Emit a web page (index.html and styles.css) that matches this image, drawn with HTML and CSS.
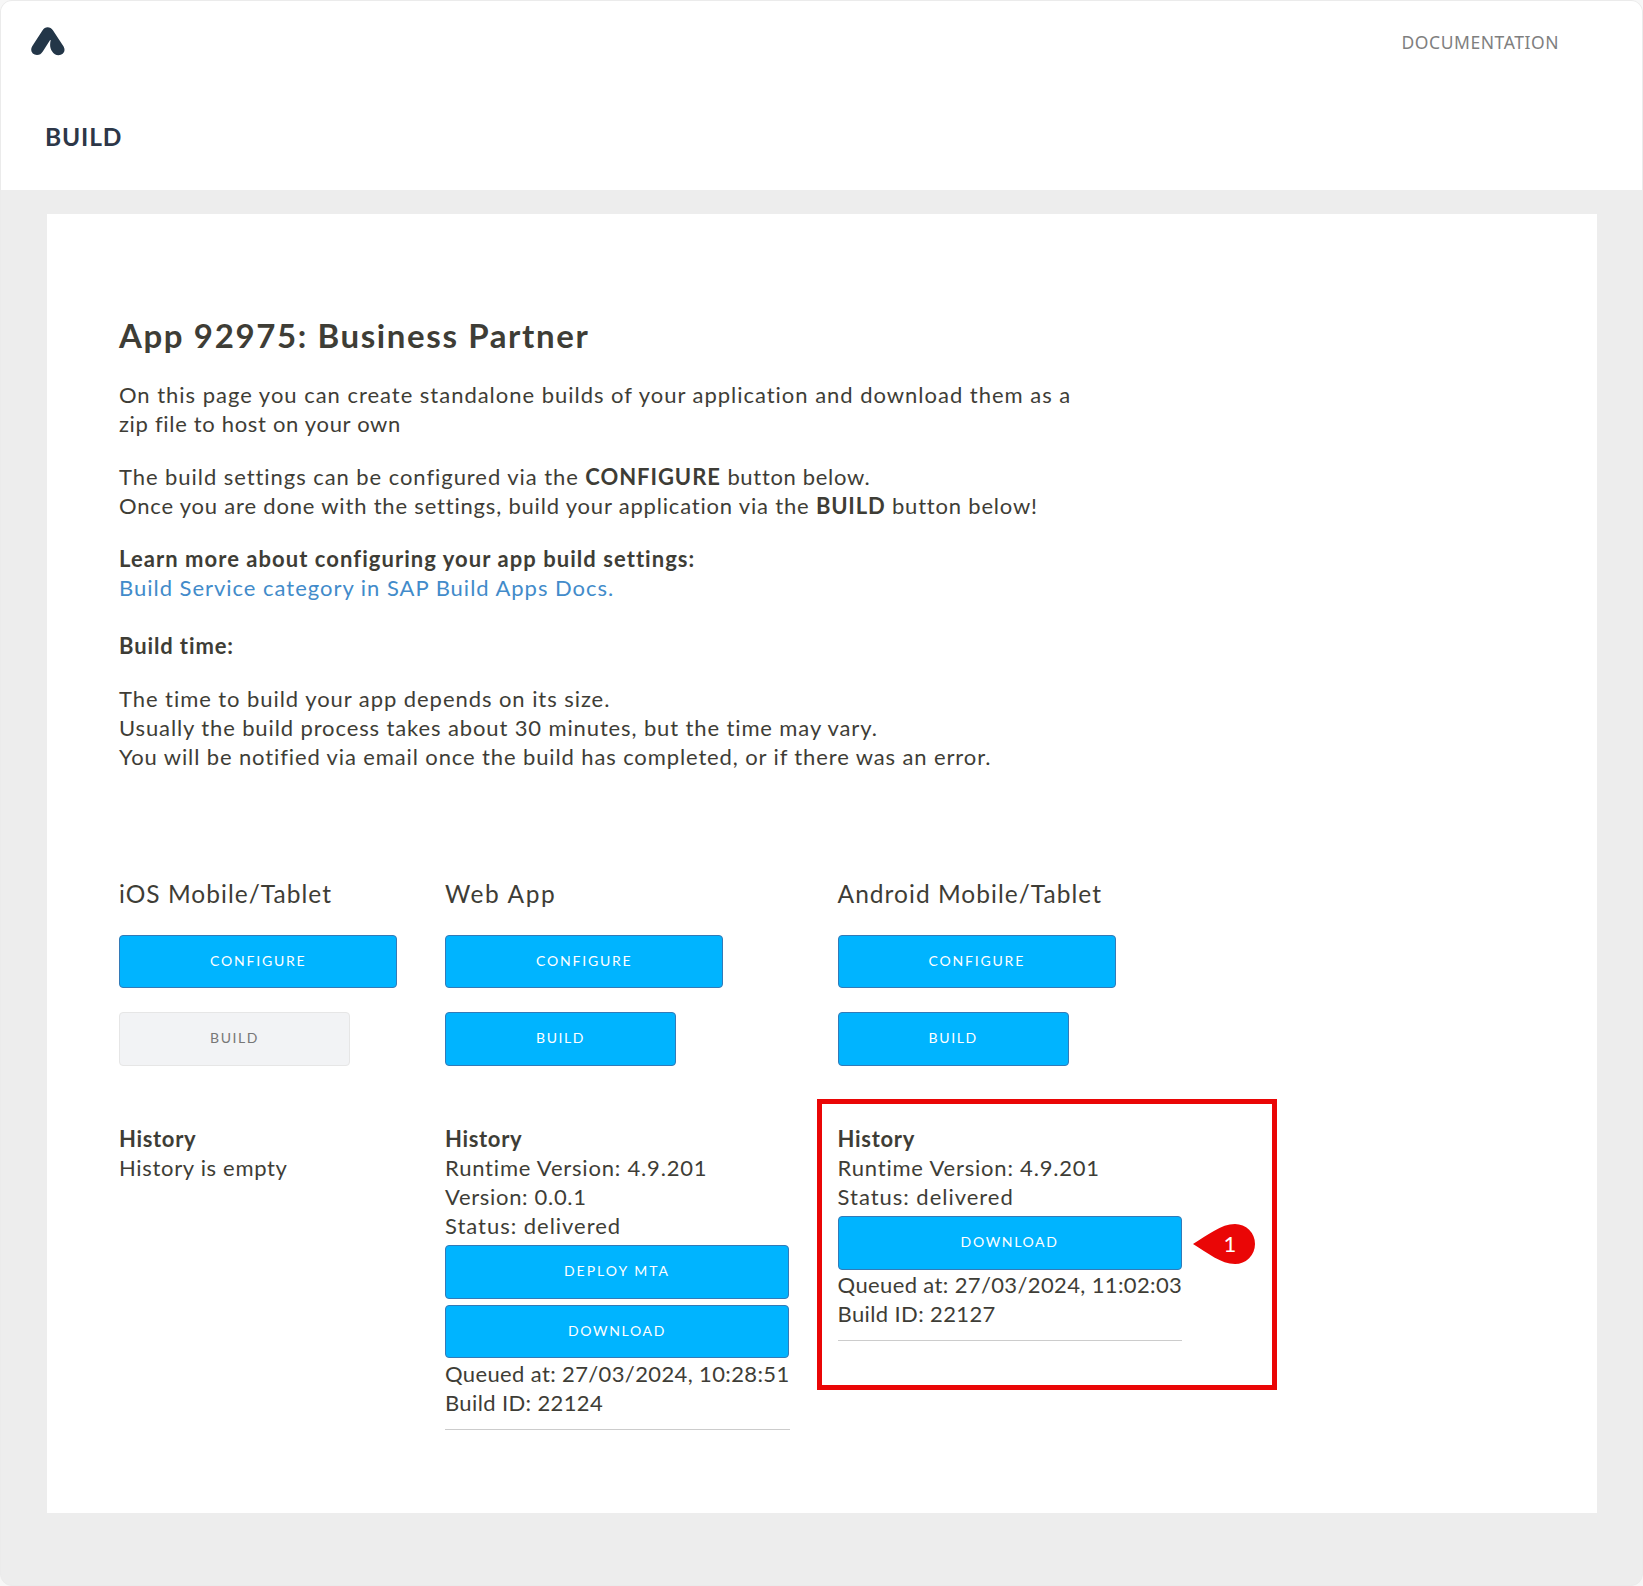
FILE: index.html
```html
<!DOCTYPE html>
<html lang="en">
<head>
<meta charset="utf-8">
<title>Build</title>
<link rel="stylesheet" href="styles.css">
</head>
<body>
<div class="page">
  <header class="header">
    <div class="topbar">
      <svg class="logo" width="34" height="30" viewBox="0 0 34 30" aria-label="Home"><path d="M11.6 4.2C13.8.1 19.4.1 21.9 4.2L32.6 20.6C35.2 25.2 31.8 29.2 27.5 29.2C24.8 29.2 22.7 28 21 25.2C18.8 21.6 18.8 19 19.6 14.6C19.7 13.9 19.2 13.8 18.8 14.4L11.8 25.6C10.2 28 8.6 29.1 6 29.1C1.4 29.1-1.4 24.6 1.2 20.2Z"/></svg>
      <a class="doclink">DOCUMENTATION</a>
    </div>
    <h1 class="heading">BUILD</h1>
  </header>
  <main class="card">
    <h2 class="title">App 92975: Business Partner</h2>
    <p><span class="wider">On this page you can create standalone builds of your application and download them as a</span><br><span class="snug">zip file to host on your own</span></p>
    <p><span class="settings">The build settings can be configured via the</span> <strong class="caps">CONFIGURE</strong> <span class="snug">button below.</span><br><span class="once">Once you are done with the settings, build your application via the <strong>BUILD</strong> button below!</span></p>
    <p><strong class="learn">Learn more about configuring your app build settings:</strong><br><a class="link">Build Service category in SAP Build Apps Docs.</a><br><br><strong>Build time:</strong></p>
    <p><span class="settings">The time to build your app depends on its size.</span><br>Usually the build process takes about 30 minutes, but the time may vary.<br>You will be notified via email once the build has completed, or if there was an error.</p>
    <div class="targets">
      <section class="target">
        <h3>iOS Mobile/Tablet</h3>
        <button class="btn configure">CONFIGURE</button>
        <button class="btn build disabled">BUILD</button>
        <div class="history"><strong class="snug">History</strong><br><span class="snug">History is empty</span></div>
      </section>
      <section class="target">
        <h3 class="webapp">Web App</h3>
        <button class="btn configure">CONFIGURE</button>
        <button class="btn build">BUILD</button>
        <div class="history"><strong class="snug">History</strong><br><span class="version">Runtime Version: 4.9.201</span><br><span class="snug">Version: 0.0.1</span><br><span class="wider">Status: delivered</span>
          <div class="actions">
            <button class="btn wide deploy">DEPLOY MTA</button>
            <button class="btn wide">DOWNLOAD</button>
          </div>
          <span class="digits">Queued at: 27/03/2024, 10:28:51</span><br><span class="digits">Build ID: 22124</span>
          <hr>
        </div>
      </section>
      <section class="target">
        <h3>Android Mobile/Tablet</h3>
        <button class="btn configure">CONFIGURE</button>
        <button class="btn build">BUILD</button>
        <div class="history"><strong class="snug">History</strong><br><span class="version">Runtime Version: 4.9.201</span><br><span class="wider">Status: delivered</span>
          <div class="actions">
            <button class="btn wide">DOWNLOAD</button>
          </div>
          <span class="digits">Queued at: 27/03/2024, 11:02:03</span><br><span class="digits">Build ID: 22127</span>
          <hr>
          <div class="callout"></div>
          <div class="pin">
            <svg width="63" height="40" viewBox="0 0 63 40"><path d="M0 20C15 11 28 0 42 0A20 20 0 0 1 42 40C28 40 15 29 0 20Z"/></svg>
            <span class="pin-number">1</span>
          </div>
        </div>
      </section>
    </div>
  </main>
</div>
</body>
</html>
```
FILE: styles.css
```css
* { box-sizing: border-box; }

body {
  margin: 0;
  background: #f7f7f7;
  color: #3e3d36;
  font: 22px/29px Lato, sans-serif;
  font-variant-ligatures: none;
  letter-spacing: .88px;
}

.page {
  height: 1586px;
  background: #ededed;
  border: 1px solid #ebebeb;
  border-radius: 12px;
  overflow: hidden;
}

.header { height: 189px; background: #fff; }
.topbar { display: flex; justify-content: space-between; padding: 25px 83px 0 30px; }
.logo { fill: #233648; }
.doclink { font: 17.5px/32px "Noto Sans", sans-serif; letter-spacing: .55px; color: #7f7f7f; }
.heading { margin: 64px 0 0 44px; font-size: 24.5px; letter-spacing: .85px; color: #2d3748; }

.card {
  height: 1299px;
  margin: 24px 45px 0 46px;
  padding: 99px 72px;
  background: #fff;
  white-space: nowrap;
}

.title { margin: 0 0 23px; font-size: 33px; line-height: 44px; letter-spacing: 1.62px; }
p { margin: 0 0 24px; }
.link { color: #428bca; letter-spacing: .98px; }
.wider { letter-spacing: .98px; }
.settings { letter-spacing: .94px; }
.snug { letter-spacing: .68px; }
.version { letter-spacing: .8px; }
.caps { letter-spacing: .95px; }
.learn { letter-spacing: 1.05px; }
.once { letter-spacing: .81px; }
.digits { letter-spacing: .37px; }

.targets { display: flex; gap: 48px; }
.target { flex: none; }
.target h3 { margin: 84px 0 26.5px; font-size: 24.5px; font-weight: 400; letter-spacing: 1.03px; }
.target .webapp { letter-spacing: 1.6px; }

.btn {
  display: block;
  height: 53.5px;
  margin: 0 0 24px;
  padding: 0 0 2px;
  background: #00b4ff;
  color: #fff;
  border: 1px solid #337ab7;
  border-radius: 4px;
  font: 14px Lato, sans-serif;
  letter-spacing: 1.8px;
}
.configure { width: 278px; padding-left: 90px; text-align: left; }
.build { width: 231px; padding-left: 90px; text-align: left; letter-spacing: 1.6px; }
.disabled { background: #f2f3f5; border-color: #e6e6e6; color: #777; }

.history { position: relative; margin-top: 58px; }
.actions { display: grid; gap: 6px; padding: 5.5px 0 .5px; }
.wide { width: 344px; margin: 0; letter-spacing: 1.66px; }
.deploy { letter-spacing: 2px; }
hr { margin: 12px 0 0; border: 0; border-top: 1px solid #ccc; }

.callout {
  position: absolute;
  left: -21px;
  top: -25px;
  width: 460px;
  height: 291px;
  border: 5px solid #ea0606;
}
.pin { position: absolute; left: 355px; top: 100px; width: 63px; height: 40px; fill: #ea0606; }
.pin svg { display: block; }
.pin-number { position: absolute; left: 31px; top: 5px; color: #fff; font: 22px/29px Lato, sans-serif; letter-spacing: 0; }
```
